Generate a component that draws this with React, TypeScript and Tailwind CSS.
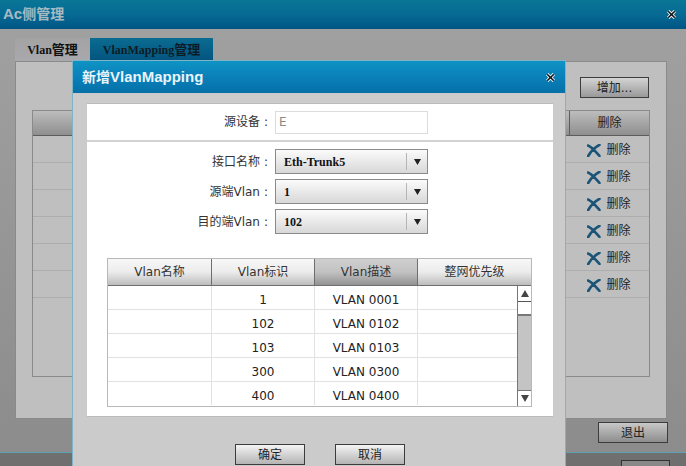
import React from "react";

const cjk = "font-['Tahoma','DejaVu_Sans','Noto_Sans_CJK_SC',sans-serif]";

function Btn({ label, className = "" }: { label: string; className?: string }) {
  return (
    <div
      className={`flex h-[21px] w-[70px] items-center justify-center border border-[#3c3c3c] bg-gradient-to-b from-[#f4f4f4] to-[#b4b4b4] text-[12px] text-[#222] ${className}`}
    >
      {label}
    </div>
  );
}

function Cross() {
  return (
    <svg width="14" height="13" viewBox="0 0 14 13">
      <path d="M1 1.5 C5 3 9 8 12.5 12 M12.5 0.8 C8.5 3 4 7 1.2 12" stroke="#1a5578" strokeWidth="2.6" fill="none" strokeLinecap="round" />
    </svg>
  );
}

function CloseX() {
  return (
    <svg width="9" height="9" viewBox="0 0 9 9">
      <path d="M1.2 1.2 L7.8 7.8 M7.8 1.2 L1.2 7.8" stroke="#fff" strokeWidth="3.2" />
      <path d="M1.2 1.2 L7.8 7.8 M7.8 1.2 L1.2 7.8" stroke="#111" strokeWidth="1.6" />
    </svg>
  );
}

function FieldLabel({ text }: { text: string }) {
  return (
    <span className="w-[188px] pr-[7px] text-right text-[12px] text-[#333]">
      {text}
      <span className="ml-[4px]">:</span>
    </span>
  );
}

function SelectBox({ value }: { value: string }) {
  return (
    <div className="flex h-[25px] w-[153px] items-center border border-[#8a8a8a] bg-gradient-to-b from-[#fbfbfb] to-[#d8d8d8]">
      <span className="flex-1 pl-2 font-['Liberation_Serif',serif] text-[12px] font-bold text-[#111]">{value}</span>
      <span className="h-[17px] w-px bg-[#b5b5b5]" />
      <span className="flex w-[20px] justify-center">
        <svg width="7" height="6" viewBox="0 0 7 6">
          <path d="M0 0 H7 L3.5 6 Z" fill="#222" />
        </svg>
      </span>
    </div>
  );
}

const headCls =
  "flex items-center justify-center border-r border-[#6e6e6e] bg-gradient-to-b from-[#f7f7f7] via-[#ececec] to-[#bdbdbd] text-[12px] text-[#333]";

const vlanRows = [
  ["1", "VLAN 0001"],
  ["102", "VLAN 0102"],
  ["103", "VLAN 0103"],
  ["300", "VLAN 0300"],
  ["400", "VLAN 0400"],
];

function Dialog() {
  return (
    <div className="absolute left-[72px] top-[60px] h-[406px] w-[494px] border-x border-t border-[#7fb4c8] bg-[#cbcbcb]">
      <div className="flex h-[32px] items-center justify-between bg-gradient-to-b from-[#0f93c4] via-[#0a80b9] to-[#0570a8] pl-[9px] pr-[10px]">
        <span className="font-['Liberation_Sans','Noto_Sans_CJK_SC',sans-serif] text-[15px] font-bold text-[#e8f4fa]">
          <span className="text-[14px]">新增</span>VlanMapping
        </span>
        <CloseX />
      </div>

      <div className="mx-[14px] mt-[10px] h-[314px] w-[466px] border-t border-[#bbb] border-b bg-white">
        <div className="flex h-[38px] items-center border-b-2 border-[#d2d2d2]">
          <FieldLabel text="源设备" />
          <div className="flex h-[23px] w-[153px] items-center border border-[#dcdcdc] pl-[3px] text-[12px] text-[#888]">E</div>
        </div>

        <div className="mt-[7px] flex flex-col gap-[5px]">
          {[
            ["接口名称", "Eth-Trunk5"],
            ["源端Vlan", "1"],
            ["目的端Vlan", "102"],
          ].map(([label, value]) => (
            <div key={label} className="flex items-center">
              <FieldLabel text={label} />
              <SelectBox value={value} />
            </div>
          ))}
        </div>

        <div className="ml-[20px] mt-[24px] w-[425px] border border-[#b8b8b8]">
          <div className="grid h-[27px] grid-cols-[104px_103px_103px_1fr] border-b border-[#6e6e6e]">
            <div className={headCls}>Vlan名称</div>
            <div className={headCls}>Vlan标识</div>
            <div className="flex items-center justify-center border-r border-[#6e6e6e] bg-gradient-to-b from-[#cfcfcf] via-[#c2c2c2] to-[#939393] text-[12px] text-[#333]">Vlan描述</div>
            <div className={`${headCls} border-r-0`}>整网优先级</div>
          </div>
          <div className="relative">
            {vlanRows.map(([id, desc], i) => (
              <div key={id} className={`grid h-[24px] grid-cols-[104px_103px_103px_1fr] border-b ${i < 4 ? "border-[#e2e2e2]" : "border-transparent"}`}>
                <div className="border-r border-[#e2e2e2]" />
                <div className="flex items-center justify-center border-r border-[#e2e2e2] pt-[5px] text-[12px] text-[#222]">{id}</div>
                <div className="flex items-center justify-center border-r border-[#e2e2e2] pt-[5px] text-[12px] text-[#222]">{desc}</div>
                <div />
              </div>
            ))}
            <div className="absolute inset-y-0 right-0 flex w-[14px] flex-col border-l border-[#777]">
              <div className="flex h-[16px] items-center justify-center border-b border-[#555] bg-white">
                <svg width="8" height="7" viewBox="0 0 8 7"><path d="M4 0 L8 7 H0 Z" fill="#444" /></svg>
              </div>
              <div className="h-[14px] border-b-2 border-[#777] bg-white" />
              <div className="flex-1 bg-[#c4c4c4]" />
              <div className="flex h-[16px] items-center justify-center border-t border-[#777] bg-white">
                <svg width="8" height="7" viewBox="0 0 8 7"><path d="M0 0 H8 L4 7 Z" fill="#444" /></svg>
              </div>
            </div>
          </div>
        </div>
      </div>

      <div className="mt-[27px] flex justify-center gap-[30px] pl-[2px]">
        <Btn label="确定" />
        <Btn label="取消" />
      </div>
    </div>
  );
}

export default function App() {
  return (
    <div className={`relative h-[466px] w-[686px] overflow-hidden bg-[#6f6f6f] ${cjk}`}>
      <div className="flex h-[29px] items-center justify-between bg-gradient-to-b from-[#0a7696] via-[#076a94] to-[#005583] pl-[3px] pr-[10px]">
        <span className="font-['Liberation_Sans','Noto_Sans_CJK_SC',sans-serif] text-[15px] font-bold text-[#a9b9c2]">
          Ac<span className="text-[14px]">侧管理</span>
        </span>
        <CloseX />
      </div>

      <div className="h-[424px] border-b border-[#5fa0b5] bg-gradient-to-b from-[#a0a0a0] to-[#8c8c8c] px-[15px] pt-[9px]">
        <div className="flex h-[23px] items-stretch font-['Liberation_Serif','Noto_Sans_CJK_SC',serif] text-[12px] font-bold">
          <div className="flex w-[75px] items-center justify-center bg-gradient-to-b from-[#a3a3a3] to-[#a9a9ae] text-[#111]">
            <span>Vlan<span className="text-[13px]">管理</span></span>
          </div>
          <div className="flex w-[123px] items-center justify-center bg-gradient-to-b from-[#0b6c92] to-[#04547e] text-[#0c1c26]">
            <span>VlanMapping<span className="text-[13px]">管理</span></span>
          </div>
        </div>

        <div className="h-[358px] w-[652px] border border-[#8a8a8a] bg-[#bfbfbf] pl-[16px] pt-[15px]">
          <div className="flex justify-end pr-[17px]">
            <div className="flex h-[21px] w-[69px] items-center justify-center border border-[#3c3c3c] bg-gradient-to-b from-[#d4d4d4] to-[#999] text-[12px] text-[#222]">增加...</div>
          </div>
          <div className="mt-[12px] h-[267px] w-[618px] border border-[#8a8a8a]">
            <div className="flex h-[25px] justify-end border-b border-[#5c5c5c] bg-gradient-to-b from-[#bdbdbd] to-[#8f8f8f]">
              <div className="flex w-[80px] items-center justify-center border-l border-[#5c5c5c] text-[12px] text-[#222]">删除</div>
            </div>
            {[0, 1, 2, 3, 4, 5].map((n) => (
              <div key={n} className="flex h-[27px] justify-end border-b border-[#adadad]">
                <div className="flex w-[80px] items-center justify-center gap-[5px] pt-[2px] text-[12px] text-[#222]">
                  <Cross />
                  删除
                </div>
              </div>
            ))}
          </div>
        </div>

        <div className="mt-[3px] flex justify-end pr-[3px]">
          <Btn label="退出" className="from-[#c8c8c8]! to-[#8e8e8e]!" />
        </div>
      </div>

      <div className="flex justify-end pr-[16px] pt-[7px]">
        <div className="h-[20px] w-[49px] border border-[#333] bg-[#888]" />
      </div>

      <Dialog />
    </div>
  );
}
